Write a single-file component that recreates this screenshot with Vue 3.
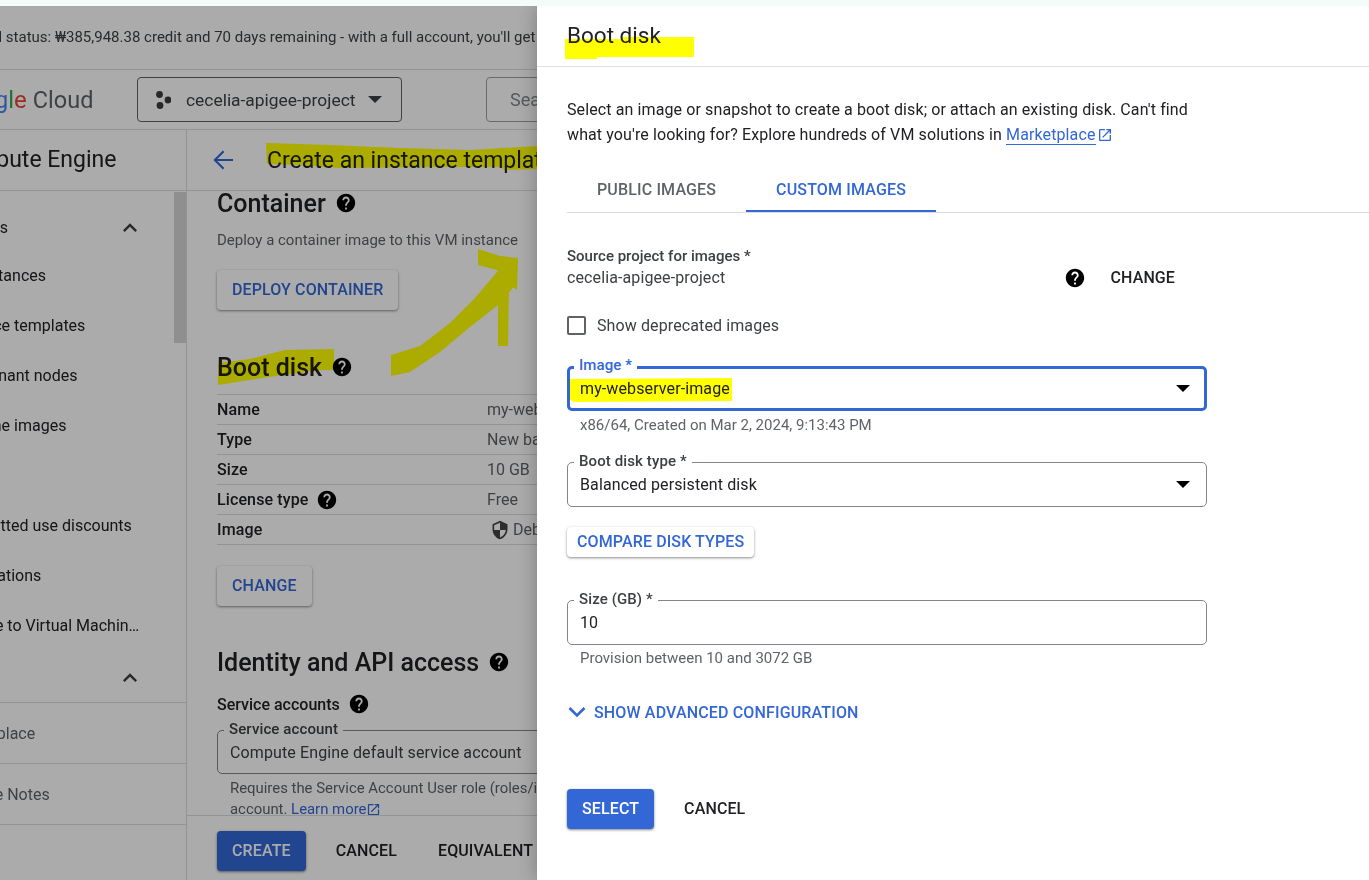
<template>
  <div class="screen">
    <svg width="0" height="0" class="defs">
      <symbol id="help" viewBox="0 0 24 24">
        <path d="M12 2C6.48 2 2 6.48 2 12s4.48 10 10 10 10-4.48 10-10S17.52 2 12 2zm1 17h-2v-2h2v2zm2.07-7.75l-.9.92C13.45 12.9 13 13.5 13 15h-2v-.5c0-1.1.45-2.1 1.17-2.83l1.24-1.26c.37-.36.59-.86.59-1.41 0-1.1-.9-2-2-2s-2 .9-2 2H8c0-2.21 1.79-4 4-4s4 1.79 4 4c0 .88-.36 1.68-.93 2.25z" />
      </symbol>
      <symbol id="open-new" viewBox="0 0 24 24">
        <path d="M19 19H5V5h7V3H5c-1.11 0-2 .9-2 2v14c0 1.1.89 2 2 2h14c1.1 0 2-.9 2-2v-7h-2v7zM14 3v2h3.59l-9.83 9.83 1.41 1.41L19 6.41V10h2V3h-7z" />
      </symbol>
    </svg>

    <div class="strip"></div>

    <div class="stage">
      <div class="page">
        <div class="trial">Free trial status: ₩385,948.38 credit and 70 days remaining - with a full account, you'll get unlimited access to all of Google Cloud.</div>

        <header class="topbar">
          <div class="logo">
            <span class="c-blue">G</span><span class="c-red">o</span><span class="c-yellow">o</span><span class="c-blue">g</span><span class="c-green">l</span><span class="c-red">e</span>
            <span class="logo-cloud">Cloud</span>
          </div>
          <div class="project">
            <svg width="16" height="18" viewBox="0 0 16 18" fill="#3c3c3c">
              <circle cx="4.5" cy="3.5" r="3.4" />
              <circle cx="13" cy="9" r="3.4" />
              <circle cx="5" cy="14.5" r="3.4" />
            </svg>
            <span class="project-name">cecelia-apigee-project</span>
            <span class="caret"></span>
          </div>
          <div class="search">Search</div>
        </header>

        <div class="columns">
          <aside class="sidebar">
            <div class="side-title">Compute Engine</div>
            <nav class="side-nav">
              <div class="side-scroll"></div>
              <div class="side-group">
                <span>Virtual machines</span>
                <svg class="side-chev" width="28" height="28" viewBox="0 0 24 24" fill="#3c3c3c"><path d="M12 8l-6 6 1.41 1.41L12 10.83l4.59 4.58L18 14z" /></svg>
              </div>
              <div v-for="item in sideItems" :key="item" class="side-item">{{ item }}</div>
              <div class="side-chevrow">
                <svg class="side-chev" width="28" height="28" viewBox="0 0 24 24" fill="#3c3c3c"><path d="M12 8l-6 6 1.41 1.41L12 10.83l4.59 4.58L18 14z" /></svg>
              </div>
              <div class="side-foot">Marketplace</div>
              <div class="side-foot">Release Notes</div>
            </nav>
          </aside>

          <main class="main">
            <div class="main-head">
              <svg width="30" height="30" viewBox="0 0 24 24" fill="none" stroke="#3367d6" stroke-width="1.7"><path d="M20 12H5.5M12.5 5l-7 7 7 7" /></svg>
              <h1>Create an instance template</h1>
            </div>

            <div class="main-scroll">
              <h2 class="sec first">Container <svg class="help" width="22" height="22"><use href="#help" /></svg></h2>
              <p class="desc">Deploy a container image to this VM instance</p>
              <button class="raised tall deploy">DEPLOY CONTAINER</button>

              <h2 class="sec boot">Boot disk <svg class="help" width="22" height="22"><use href="#help" /></svg></h2>
              <div class="table">
                <div v-for="row in diskRows" :key="row.label" class="row">
                  <div class="row-label">
                    {{ row.label }}
                    <svg v-if="row.help" class="help" width="22" height="22"><use href="#help" /></svg>
                  </div>
                  <div class="row-value">
                    <svg v-if="row.shield" class="shield" width="20" height="20" viewBox="0 0 24 24" fill="#444"><path d="M12 1 3 5v6c0 5.55 3.84 10.74 9 12 5.16-1.26 9-6.45 9-12V5l-9-4zm0 10.99h7c-.53 4.12-3.28 7.79-7 8.94V12H5V6.3l7-3.11v8.8z" /></svg>
                    {{ row.value }}
                  </div>
                </div>
              </div>
              <button class="raised tall change">CHANGE</button>

              <h2 class="sec identity">Identity and API access <svg class="help" width="22" height="22"><use href="#help" /></svg></h2>
              <div class="svc-title">Service accounts <svg class="help" width="22" height="22"><use href="#help" /></svg></div>
              <div class="outlined svc-field">
                <span class="float-label">Service account</span>
                Compute Engine default service account
              </div>
              <p class="svc-hint">
                Requires the Service Account User role (roles/iam.serviceAccountUser) to be set for users who want to access VMs with this service<br />
                account. <span class="learn">Learn more</span>
                <svg class="ext" width="15" height="15" fill="#3367d6"><use href="#open-new" /></svg>
              </p>
            </div>

            <div class="main-foot">
              <button class="primary create">CREATE</button>
              <button class="flat cancel-l">CANCEL</button>
              <button class="flat">EQUIVALENT CODE</button>
            </div>
          </main>
        </div>
      </div>

      <svg class="scribbles" width="537" height="874" viewBox="0 6 537 874" fill="#ffff00">
        <path d="M266 143 L330 145 L400 148 L470 150 L537 146 L537 169 L505 170 L500 167 L420 167 L340 168 L300 165 L267 164 Z" />
        <path d="M218 363 L250 359 L285 350 L334 349 L334 370 L322 370 L290 374 L262 378 L218 385 Z" />
        <path d="M391 355 L420 346 L450 323 L475 298 L497 272 L513 262 L517 282 L502 302 L470 327 L440 352 L410 372 L391 376 Z" />
        <path d="M478 249 L500 256 L518 258 L517 290 L505 282 L497 270 L478 265 Z" />
        <path d="M498 290 L509 282 L508 346 L498 346 Z" />
      </svg>

      <div class="dim"></div>

      <section class="panel">
        <div class="panel-head">
          <svg class="mark" width="130" height="22" viewBox="0 0 130 22" fill="#ffff00"><path d="M0 2 L56 2 L56 0 L129 0 L129 20 L32 20 L32 22 L0 22 Z" /></svg>
          <span>Boot disk</span>
        </div>

        <div class="panel-body">
          <p class="intro">
            Select an image or snapshot to create a boot disk; or attach an existing disk. Can't find<br />
            what you're looking for? Explore hundreds of VM solutions in
            <a class="market">Marketplace</a>
            <svg class="ext market-ext" width="16" height="16" fill="#3367d6"><use href="#open-new" /></svg>
          </p>

          <div class="tabs">
            <div class="tab">PUBLIC IMAGES</div>
            <div class="tab active">CUSTOM IMAGES</div>
          </div>

          <div class="form">
            <div class="source">
              <div class="source-text">
                <div class="source-label">Source project for images *</div>
                <div class="source-value">cecelia-apigee-project</div>
              </div>
              <svg class="source-help" width="22" height="22"><use href="#help" /></svg>
              <span class="source-change">CHANGE</span>
            </div>

            <label class="check">
              <span class="box"></span>
              Show deprecated images
            </label>

            <div class="outlined focused image-field">
              <span class="float-label">Image *</span>
              <svg class="mark" width="162" height="24" viewBox="0 0 162 24" fill="#ffff00"><path d="M0 1 L162 0 L162 23 L4 24 L0 22 Z" /></svg>
              <span class="field-text">my-webserver-image</span>
              <span class="caret black"></span>
            </div>
            <div class="hint image-hint">x86/64, Created on Mar 2, 2024, 9:13:43 PM</div>

            <div class="outlined disk-field">
              <span class="float-label">Boot disk type *</span>
              <span class="field-text">Balanced persistent disk</span>
              <span class="caret black"></span>
            </div>

            <button class="raised compare">COMPARE DISK TYPES</button>

            <div class="outlined size-field">
              <span class="float-label">Size (GB) *</span>
              <span class="field-text">10</span>
            </div>
            <div class="hint size-hint">Provision between 10 and 3072 GB</div>

            <div class="advanced">
              <svg width="18" height="12" viewBox="0 0 18 12" fill="none" stroke="#3367d6" stroke-width="2.6"><path d="M1.5 2 9 9.5 16.5 2" /></svg>
              SHOW ADVANCED CONFIGURATION
            </div>

            <div class="actions">
              <button class="primary select">SELECT</button>
              <button class="flat">CANCEL</button>
            </div>
          </div>
        </div>
      </section>
    </div>
  </div>
</template>

<script setup>
const sideItems = [
  'VM instances',
  'Instance templates',
  'Sole-tenant nodes',
  'Machine images',
  ' ',
  'Committed use discounts',
  'Reservations',
  'Migrate to Virtual Machin…',
]

const diskRows = [
  { label: 'Name', value: 'my-webserver-image-disk' },
  { label: 'Type', value: 'New balanced persistent disk' },
  { label: 'Size', value: '10 GB' },
  { label: 'License type', value: 'Free', help: true },
  { label: 'Image', value: 'Debian GNU/Linux 11', shield: true },
]
</script>

<style>
html, body {
  margin: 0;
  overflow: hidden;
}
</style>

<style scoped>
.screen {
  width: 1369px;
  height: 880px;
  overflow: hidden;
  background: #f4fbf9;
  font-family: Roboto, "Liberation Sans", sans-serif;
  font-size: 16px;
  color: #000;
}
.defs {
  position: absolute;
}
.strip {
  height: 6px;
}
.stage {
  position: relative;
  height: 874px;
  overflow: hidden;
  background: #fff;
}
.page {
  width: 1434px;
  height: 874px;
  margin-left: -65px;
  display: flex;
  flex-direction: column;
}
.trial {
  height: 63px;
  line-height: 62px;
  padding-left: 9px;
  font-size: 15px;
  white-space: nowrap;
  color: #3c4043;
  border-bottom: 1px solid #dadce0;
}
.topbar {
  height: 59px;
  border-bottom: 1px solid #dadce0;
  display: flex;
  align-items: center;
}
.logo {
  width: 186px;
  padding-left: 16px;
  font-size: 24px;
  white-space: nowrap;
  color: #5f6368;
}
.logo-cloud {
  margin-left: 6px;
  font-size: 23.5px;
}
.c-blue { color: #4285f4; }
.c-red { color: #ea4335; }
.c-yellow { color: #fbbc04; }
.c-green { color: #34a853; }
.project {
  width: 265px;
  height: 45px;
  box-sizing: border-box;
  border: 1px solid #5f6368;
  border-radius: 4px;
  display: flex;
  align-items: center;
  padding-left: 17px;
  flex: none;
}
.project-name {
  margin-left: 15px;
  font-size: 17.4px;
  color: #3c4043;
}
.project .caret {
  margin-left: 13px;
  border-top-color: #3c4043;
}
.caret {
  width: 0;
  height: 0;
  border-left: 7.5px solid transparent;
  border-right: 7.5px solid transparent;
  border-top: 7.5px solid #000;
}
.search {
  width: 400px;
  height: 45px;
  box-sizing: border-box;
  margin-left: 84px;
  padding-left: 23px;
  line-height: 43px;
  font-size: 18px;
  color: #80868b;
  border: 1px solid #9aa0a6;
  border-radius: 4px;
}
.columns {
  flex: 1;
  display: flex;
  min-height: 0;
}
.sidebar {
  width: 251px;
  flex: none;
  border-right: 1px solid #dadce0;
  display: flex;
  flex-direction: column;
}
.side-title {
  height: 60px;
  flex: none;
  border-bottom: 1px solid #dadce0;
  padding-left: 13px;
  line-height: 60px;
  font-size: 23px;
  color: #202124;
  white-space: nowrap;
}
.side-nav {
  position: relative;
  flex: 1;
  font-size: 16px;
  color: #202124;
}
.side-scroll {
  position: absolute;
  right: 0;
  top: 1px;
  width: 12px;
  height: 151px;
  background: #d5d5d5;
}
.side-group {
  height: 50px;
  margin: 11px 0 0 -47px;
  padding-right: 42px;
  display: flex;
  align-items: center;
  justify-content: space-between;
  white-space: nowrap;
}
.side-chev {
  display: block;
}
.side-group .side-chev {
  margin-top: 2px;
}
.side-item {
  height: 50px;
  line-height: 48px;
  padding-left: 14px;
  white-space: nowrap;
}
.side-chevrow {
  height: 53px;
  padding: 14px 0 0 181px;
  box-sizing: border-box;
  border-bottom: 1px solid #dadce0;
  margin-top: -2px;
}
.side-foot {
  height: 61px;
  box-sizing: border-box;
  line-height: 61px;
  padding-left: 12px;
  color: #5f6368;
  border-bottom: 1px solid #dadce0;
}
.main {
  flex: 1;
  min-width: 0;
  display: flex;
  flex-direction: column;
}
.main-head {
  height: 60px;
  flex: none;
  border-bottom: 1px solid #dadce0;
  display: flex;
  align-items: center;
  padding-left: 21px;
}
.main-head h1 {
  margin: 0 0 0 29px;
  font-size: 23px;
  font-weight: 400;
  white-space: nowrap;
  color: #202124;
}
.main-scroll {
  flex: 1;
  min-height: 0;
  overflow: hidden;
  padding-left: 30px;
}
.sec {
  margin: 0;
  display: flex;
  align-items: center;
  box-sizing: border-box;
  height: 24px;
  padding-top: 2px;
  font-size: 25px;
  line-height: 22px;
  font-weight: 500;
  color: #202124;
  white-space: nowrap;
}
.help {
  display: block;
  flex: none;
  fill: #000;
}
.sec .help {
  margin: -2px 0 0 9px;
}
.desc {
  margin: 15px 0 0;
  line-height: 20px;
  font-size: 15px;
  color: #5f6368;
}
.raised {
  display: block;
  padding: 0 15px 2px;
  height: 30px;
  border: 0;
  border-radius: 4px;
  background: #fff;
  font: 500 16px Roboto, "Liberation Sans", sans-serif;
  letter-spacing: 0.12px;
  color: #3367d6;
  box-shadow: 0 1px 3px rgba(60, 64, 67, 0.35), 0 1px 2px rgba(60, 64, 67, 0.3);
  white-space: nowrap;
}
.tall {
  height: 40px;
}
.deploy {
  margin-top: 20px;
}
.boot {
  margin-top: 45px;
}
.table {
  margin-top: 15px;
  border-top: 1px solid #dadce0;
}
.row {
  height: 30px;
  box-sizing: border-box;
  border-bottom: 1px solid #dadce0;
  display: flex;
  align-items: center;
  white-space: nowrap;
}
.row-label {
  width: 270px;
  flex: none;
  display: flex;
  align-items: center;
  gap: 7px;
  font-weight: 500;
  letter-spacing: 0.12px;
  color: #202124;
}
.row-value {
  display: flex;
  align-items: center;
  gap: 3px;
  color: #5f6368;
}
.shield {
  margin-left: 3px;
}
.change {
  margin-top: 21px;
}
.identity {
  margin-top: 44px;
}
.svc-title {
  margin-top: 20px;
  height: 20px;
  display: flex;
  align-items: center;
  gap: 8px;
  font-weight: 500;
  color: #202124;
}
.outlined {
  position: relative;
  box-sizing: border-box;
  width: 640px;
  height: 45px;
  border: 1px solid #80868b;
  border-radius: 5px;
  display: flex;
  align-items: center;
  justify-content: space-between;
  padding: 0 16px 0 12px;
  color: #202124;
}
.float-label {
  position: absolute;
  left: 6px;
  top: -11px;
  padding: 0 5px;
  line-height: 18px;
  background: #fff;
  font-size: 15px;
  font-weight: 500;
  color: #3c4043;
  white-space: nowrap;
}
.svc-field {
  margin-top: 16px;
  height: 44px;
  justify-content: flex-start;
  padding-top: 1px;
  letter-spacing: 0.12px;
  color: #3c4043;
}
.svc-hint {
  margin: 4px 0 0;
  padding-left: 13px;
  width: 900px;
  line-height: 21px;
  font-size: 14.9px;
  white-space: nowrap;
  color: #5f6368;
}
.learn {
  color: #3367d6;
}
.ext {
  vertical-align: -3px;
}
.main-foot {
  height: 65px;
  flex: none;
  box-sizing: border-box;
  border-top: 1px solid #dadce0;
  display: flex;
  align-items: center;
  padding: 6px 0 0 30px;
}
.primary {
  height: 40px;
  padding: 0 15px 2px;
  border: 0;
  border-radius: 4px;
  background: #3367d6;
  color: #fff;
  font: 500 16px Roboto, "Liberation Sans", sans-serif;
  letter-spacing: 0.12px;
  box-shadow: 0 1px 3px rgba(60, 64, 67, 0.4), 0 1px 2px rgba(60, 64, 67, 0.3);
}
.flat {
  padding: 0 0 2px;
  border: 0;
  background: none;
  color: #202124;
  font: 500 16px Roboto, "Liberation Sans", sans-serif;
  letter-spacing: 0.12px;
  white-space: nowrap;
}
.cancel-l {
  margin: 0 41px 0 30px;
}
.scribbles {
  position: absolute;
  left: 0;
  top: 0;
  mix-blend-mode: multiply;
}
.dim {
  position: absolute;
  inset: 0;
  background: rgba(0, 0, 0, 0.33);
}
.panel {
  position: absolute;
  top: 0;
  right: 0;
  bottom: 0;
  width: 832px;
  background: #fff;
  letter-spacing: 0.11px;
  box-shadow: 0 0 18px rgba(0, 0, 0, 0.28);
}
.panel-head {
  position: relative;
  height: 61px;
  box-sizing: border-box;
  border-bottom: 1px solid #e0e0e0;
  padding-left: 30px;
  line-height: 59px;
  font-size: 22.5px;
  letter-spacing: 0;
  color: #202124;
}
.panel-head .mark {
  position: absolute;
  left: 28px;
  top: 31px;
}
.mark {
  mix-blend-mode: multiply;
}
.panel-body {
  padding-left: 30px;
}
.intro {
  margin: 30px 0 0;
  line-height: 25px;
  color: #202124;
  white-space: nowrap;
}
.market {
  color: #3367d6;
  border-bottom: 1px solid #3367d6;
}
.market-ext {
  margin-left: 1px;
}
.tabs {
  margin-top: 20px;
  height: 46px;
  box-sizing: border-box;
  border-bottom: 1px solid #dadce0;
  display: flex;
}
.tab {
  height: 45px;
  box-sizing: border-box;
  padding: 0 30px;
  line-height: 46px;
  font-weight: 500;
  letter-spacing: 0.15px;
  color: #5f6368;
}
.tab.active {
  color: #3367d6;
  border-bottom: 2px solid #3367d6;
}
.form {
  width: 640px;
}
.source {
  margin-top: 34px;
  display: flex;
  align-items: flex-end;
}
.source-text {
  flex: 1;
}
.source-label {
  line-height: 18px;
  font-size: 15px;
  font-weight: 500;
  letter-spacing: 0;
  color: #3c4043;
}
.source-value {
  margin-top: 3px;
  line-height: 20px;
  color: #3c4043;
}
.source-help {
  margin-bottom: -1px;
}
.source-change {
  margin: 0 32px 0 25px;
  line-height: 20px;
  font-weight: 500;
  color: #202124;
}
.check {
  margin-top: 27px;
  height: 20px;
  display: flex;
  align-items: center;
  gap: 11px;
  color: #3c4043;
}
.box {
  width: 19px;
  height: 19px;
  box-sizing: border-box;
  border: 2px solid #5f6368;
  border-radius: 2px;
}
.image-field {
  margin-top: 31px;
}
.focused {
  border: 3px solid #3367d6;
  padding: 0 14px 0 10px;
}
.focused .float-label {
  left: 4px;
  top: -13px;
  color: #3367d6;
}
.focused .mark {
  position: absolute;
  left: 0;
  top: 9px;
}
.field-text {
  position: relative;
}
.hint {
  padding-left: 13px;
  line-height: 20px;
  font-size: 15px;
  letter-spacing: 0;
  color: #5f6368;
}
.image-hint {
  margin-top: 4px;
}
.disk-field {
  margin-top: 27px;
}
.compare {
  margin-top: 20px;
  padding: 0 10px 1px;
}
.size-field {
  margin-top: 43px;
}
.size-hint {
  margin-top: 3px;
}
.advanced {
  margin: 34px 0 0 1px;
  height: 20px;
  display: flex;
  align-items: center;
  gap: 8px;
  font-weight: 500;
  letter-spacing: 0.15px;
  color: #3367d6;
  white-space: nowrap;
}
.actions {
  margin-top: 67px;
  display: flex;
  align-items: center;
  gap: 30px;
}
</style>
